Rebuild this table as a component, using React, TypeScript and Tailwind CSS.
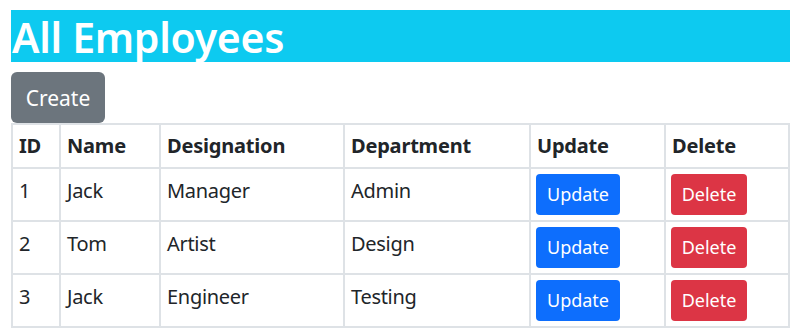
const employees = [
  { id: 1, name: 'Jack', designation: 'Manager', department: 'Admin' },
  { id: 2, name: 'Tom', designation: 'Artist', department: 'Design' },
  { id: 3, name: 'Jack', designation: 'Engineer', department: 'Testing' },
]

const headers = ['ID', 'Name', 'Designation', 'Department', 'Update', 'Delete']

export default function App() {
  return (
    <div className="min-h-screen bg-white pl-[11px] pt-[10px] font-['Noto_Sans',sans-serif] text-[#212529]">
      <div className="w-[779px]">
        <h1 className="h-[52px] bg-[#0dcaf0] pl-[1px] pt-[1px] text-[41px] font-semibold leading-[52px] tracking-[-0.3px] text-white">
          All Employees
        </h1>
        <button className="mt-[10px] h-[51px] w-[94px] rounded-[6px] bg-[#6c757d] pt-[2px] text-[21px] text-white">
          Create
        </button>
        <table className="w-full table-fixed border-collapse border-2 border-[#dee2e6]">
          <colgroup>
            <col className="w-[48px]" />
            <col className="w-[100px]" />
            <col className="w-[184px]" />
            <col className="w-[186px]" />
            <col className="w-[135px]" />
            <col />
          </colgroup>
          <thead>
            <tr>
              {headers.map((h) => (
                <th
                  key={h}
                  className="border-2 border-[#dee2e6] px-[6px] py-[7px] text-left align-top text-[20px] font-bold leading-[28px] tracking-[-0.2px]"
                >
                  {h}
                </th>
              ))}
            </tr>
          </thead>
          <tbody>
            {employees.map((e) => (
              <tr key={e.id}>
                <td className="border-2 border-[#dee2e6] px-[6px] py-[5px] align-top text-[20px] leading-[34px] tracking-[-0.3px]">{e.id}</td>
                <td className="border-2 border-[#dee2e6] px-[6px] py-[5px] align-top text-[20px] leading-[34px] tracking-[-0.3px]">{e.name}</td>
                <td className="border-2 border-[#dee2e6] px-[6px] py-[5px] align-top text-[20px] leading-[34px] tracking-[-0.3px]">{e.designation}</td>
                <td className="border-2 border-[#dee2e6] px-[6px] py-[5px] align-top text-[20px] leading-[34px] tracking-[-0.3px]">{e.department}</td>
                <td className="border-2 border-[#dee2e6] px-[5px] py-[5px] align-top">
                  <button className="block h-[41px] w-[84px] rounded-[4px] bg-[#0d6efd] text-[18px] text-white">
                    Update
                  </button>
                </td>
                <td className="border-2 border-[#dee2e6] px-[5px] py-[5px] align-top">
                  <button className="block h-[41px] w-[76px] rounded-[4px] bg-[#dc3545] text-[18px] text-white">
                    Delete
                  </button>
                </td>
              </tr>
            ))}
          </tbody>
        </table>
      </div>
    </div>
  )
}
